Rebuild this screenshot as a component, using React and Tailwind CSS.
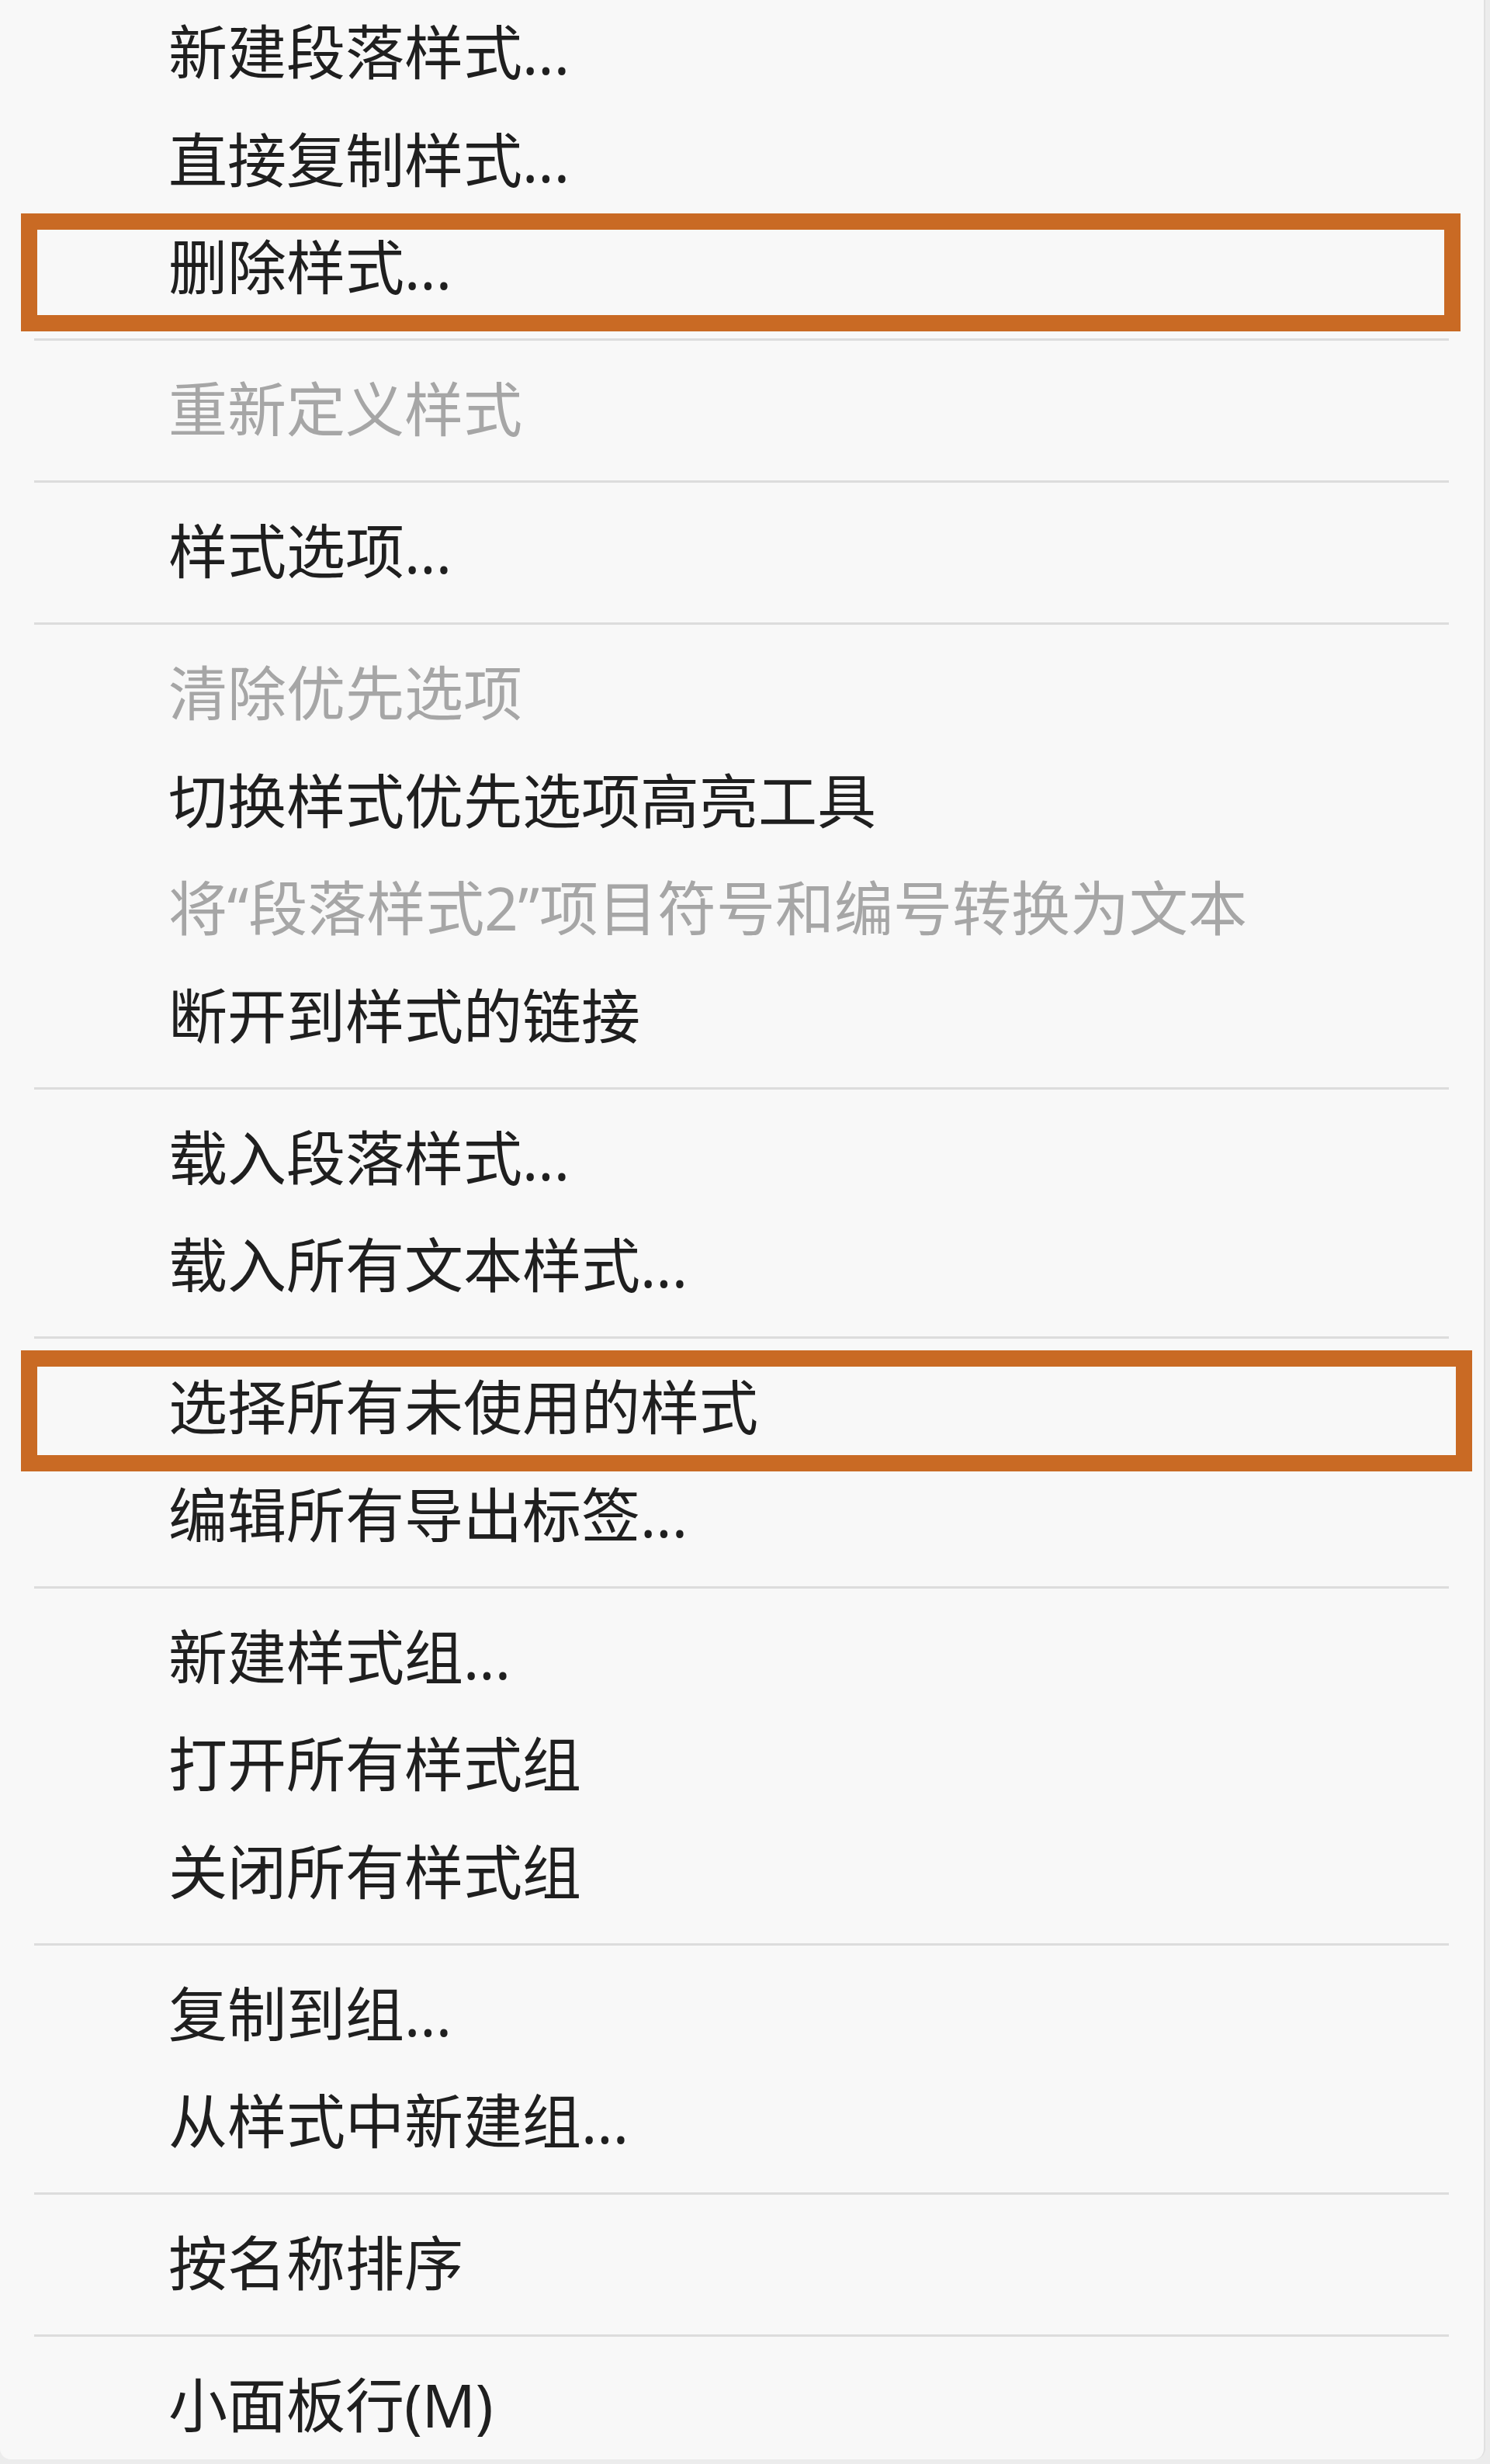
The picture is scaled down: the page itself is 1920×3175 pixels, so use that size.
import React from 'react';

const items = [
  { label: '新建段落样式...' },
  { label: '直接复制样式...' },
  { label: '删除样式...', box: 'top-[-2px] h-[152px] w-[1855px]' },
  { sep: true },
  { label: '重新定义样式', disabled: true },
  { sep: true },
  { label: '样式选项...' },
  { sep: true },
  { label: '清除优先选项', disabled: true },
  { label: '切换样式优先选项高亮工具' },
  { label: '将“段落样式2”项目符号和编号转换为文本', disabled: true },
  { label: '断开到样式的链接' },
  { sep: true },
  { label: '载入段落样式...' },
  { label: '载入所有文本样式...' },
  { sep: true },
  { label: '选择所有未使用的样式', box: 'top-[-6px] h-[156px] w-[1870px]' },
  { label: '编辑所有导出标签...' },
  { sep: true },
  { label: '新建样式组...' },
  { label: '打开所有样式组' },
  { label: '关闭所有样式组' },
  { sep: true },
  { label: '复制到组...' },
  { label: '从样式中新建组...' },
  { sep: true },
  { label: '按名称排序' },
  { sep: true },
  { label: '小面板行(M)' },
];

function Separator() {
  return (
    <div className="h-[44.5px] flex items-center">
      <div className="ml-[44px] w-[1823px] h-[3px] bg-[#dcdcdc]" />
    </div>
  );
}

function MenuItem({ label, disabled, box }) {
  return (
    <div className="relative h-[138.5px] flex items-center pb-[4px] pl-[217px]">
      <span
        className={
          'text-[76px] leading-none whitespace-nowrap ' +
          (disabled ? 'text-[#a6a6a6]' : 'text-[#1f1f1f]')
        }
      >
        {label}
      </span>
      {/* highlight frame drawn over the row */}
      {box && (
        <div className={'absolute left-[27px] border-[21px] border-[#c96a24] pointer-events-none ' + box} />
      )}
    </div>
  );
}

export default function App() {
  return (
    <div
      className="w-[1920px] h-[3175px] bg-[#ececec] overflow-hidden"
      style={{ fontFamily: '"Noto Sans", "Noto Sans CJK SC", sans-serif' }}
    >
      <div className="w-[1914px] h-[3169px] bg-[#f8f8f8] border-r-2 border-[#e0e0e0] rounded-b-[14px]">
        {items.map((it, i) =>
          it.sep ? <Separator key={i} /> : <MenuItem key={i} {...it} />
        )}
      </div>
    </div>
  );
}
